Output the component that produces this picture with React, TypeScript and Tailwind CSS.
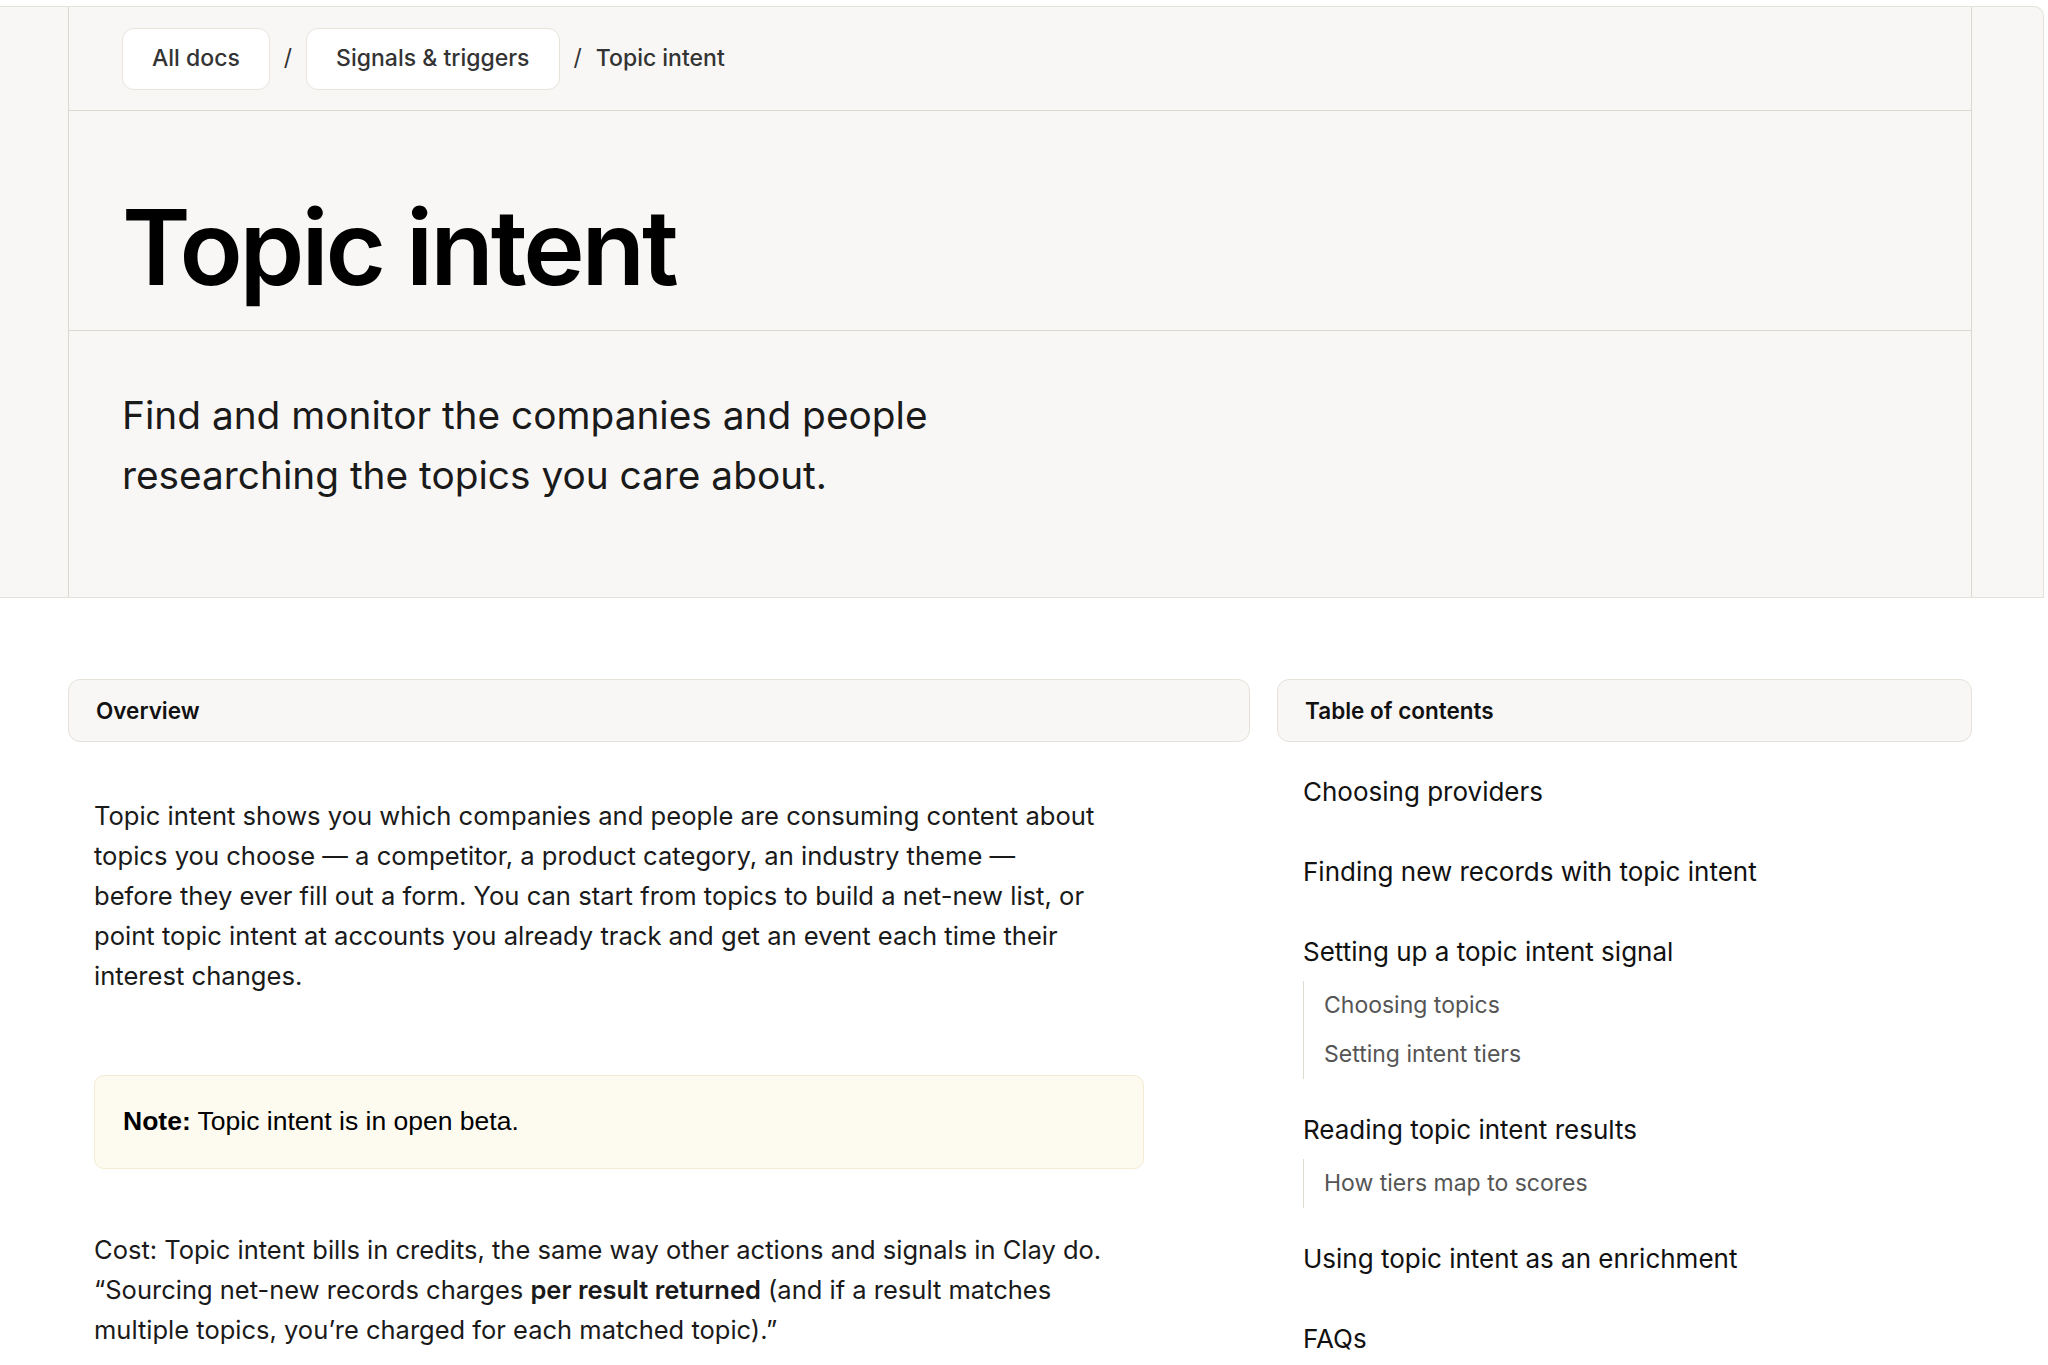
import React from "react";

type TocItem = { title: string; subs?: string[] };

const TOC: TocItem[] = [
  { title: "Choosing providers" },
  { title: "Finding new records with topic intent" },
  { title: "Setting up a topic intent signal", subs: ["Choosing topics", "Setting intent tiers"] },
  { title: "Reading topic intent results", subs: ["How tiers map to scores"] },
  { title: "Using topic intent as an enrichment" },
  { title: "FAQs" },
];

function Crumb({ label }: { label: string }) {
  return (
    <a className="flex h-[62px] items-center rounded-[12px] border border-[#e8e4dc] bg-white px-[29px] text-[23px] font-medium text-[#333]">
      {label}
    </a>
  );
}

function SectionCard({ label }: { label: string }) {
  return (
    <div className="flex h-[63px] items-center rounded-[12px] border border-[#e6e2da] bg-[#f8f7f5] px-[27px] text-[22.5px] font-semibold text-[#111]">
      {label}
    </div>
  );
}

export default function App() {
  return (
    <div className="min-h-screen w-full bg-white pb-10 font-['Inter',sans-serif] text-[#1a1a1a]">
      {/* hero */}
      <div className="mt-[6px] mr-[4px] rounded-tr-[10px] border-y border-r border-[#e4e1da] bg-[#f8f7f5]">
        <div className="ml-[68px] mr-[71px] border-x border-[#dcd9d1]">
          <div className="flex h-[104px] items-center gap-[14px] border-b border-[#dcd9d1] pl-[53px] text-[#333]">
            <Crumb label="All docs" />
            <span className="text-[23px]">/</span>
            <Crumb label="Signals & triggers" />
            <span className="text-[23px]">/</span>
            <span className="text-[23px] font-medium">Topic intent</span>
          </div>
          <div className="h-[220px] border-b border-[#dcd9d1] pl-[53px] pt-[84px]">
            <h1 className="text-[104px] font-semibold leading-none tracking-[-0.03em] text-black">
              Topic intent
            </h1>
          </div>
          <div className="h-[266px] pl-[53px] pt-[54px]">
            <p className="max-w-[960px] text-[38.8px] leading-[60px] text-[#1a1a1a]">
              Find and monitor the companies and people researching the topics you care about.
            </p>
          </div>
        </div>
      </div>

      {/* body */}
      <div className="mt-[81px] ml-[68px] mr-[76px] flex gap-[27px]">
        <div className="flex-1">
          <SectionCard label="Overview" />
          <div className="pl-[26px]">
            <p className="mt-[54px] text-[25.6px] leading-[40px]">
              Topic intent shows you which companies and people are consuming content about
              <br />
              topics you choose — a competitor, a product category, an industry theme —
              <br />
              before they ever fill out a form. You can start from topics to build a net-new list, or
              <br />
              point topic intent at accounts you already track and get an event each time their
              <br />
              interest changes.
            </p>
            <div className="mt-[79px] flex h-[94px] w-[1050px] items-center rounded-[10px] border border-[#f3ecd3] bg-[#fdfbf0] px-[28px] font-['Liberation_Sans',Arial,sans-serif] text-[26.5px] text-black">
              <span>
                <b>Note:</b> Topic intent is in open beta.
              </span>
            </div>
            <p className="mt-[61px] text-[25.5px] leading-[40px]">
              Cost: Topic intent bills in credits, the same way other actions and signals in Clay do.
              <br />
              “Sourcing net-new records charges <b className="font-semibold">per result returned</b> (and
              if a result matches
              <br />
              multiple topics, you’re charged for each matched topic).”
            </p>
          </div>
        </div>

        <div className="w-[695px] shrink-0">
          <SectionCard label="Table of contents" />
          <nav className="mt-[29px] pl-[26px]">
            {TOC.map((item, i) => {
              const spacing = i === 0 ? "" : TOC[i - 1].subs ? "mt-[30px]" : "mt-10";
              return (
                <div key={item.title}>
                  <div className={`${spacing} flex h-10 items-center`}>
                    <span className="text-[26px] text-[#111]">{item.title}</span>
                  </div>
                  {item.subs && (
                    <div className="mt-[10px] border-l border-[#dedad2] pl-[20px]">
                      {item.subs.map((s) => (
                        <div key={s} className="flex h-[49px] items-center text-[23px] text-[#555]">
                          {s}
                        </div>
                      ))}
                    </div>
                  )}
                </div>
              );
            })}
          </nav>
        </div>
      </div>
    </div>
  );
}
